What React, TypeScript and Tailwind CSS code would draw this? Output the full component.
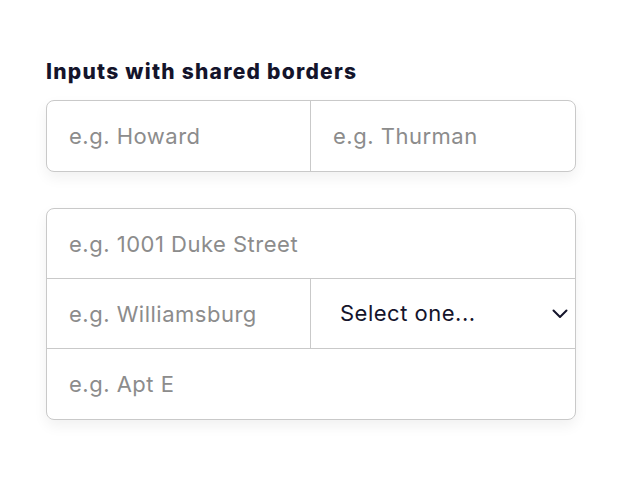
import { useState } from 'react';

const cellInput =
    'w-full h-full px-[22px] text-[22px] tracking-[0.5px] text-[#14142b] placeholder:text-[#8c8c8c] bg-transparent outline-none';

export default function App() {
    const [state, setState] = useState('');

    return (
        <div className="min-h-[486px] w-[630px] bg-white px-[46px] pt-[58px]" style={{ fontFamily: 'Inter, "Noto Sans", sans-serif' }}>
            <h2 className="text-[21px] leading-[28px] font-extrabold tracking-[1.25px] text-[#14142b]">
                Inputs with shared borders
            </h2>

            {/* First + last name */}
            <div className="mt-[14px] w-[530px] grid grid-cols-2 rounded-lg border border-[#c9c9c9] overflow-hidden bg-white shadow-[0_6px_14px_rgba(0,0,0,0.06)]">
                <div className="h-[70px] border-r border-[#c9c9c9]">
                    <input className={cellInput} placeholder="e.g. Howard" />
                </div>
                <div className="h-[70px]">
                    <input className={cellInput} placeholder="e.g. Thurman" />
                </div>
            </div>

            {/* Address */}
            <div className="mt-[36px] w-[530px] rounded-lg border border-[#c9c9c9] overflow-hidden bg-white shadow-[0_6px_14px_rgba(0,0,0,0.06)]">
                <div className="h-[70px] border-b border-[#c9c9c9]">
                    <input className={cellInput} placeholder="e.g. 1001 Duke Street" />
                </div>
                <div className="h-[70px] grid grid-cols-2 border-b border-[#c9c9c9]">
                    <div className="border-r border-[#c9c9c9]">
                        <input className={cellInput} placeholder="e.g. Williamsburg" />
                    </div>
                    <div className="relative">
                        <select
                            value={state}
                            onChange={e => setState(e.target.value)}
                            className="w-full h-full appearance-none bg-transparent pl-[29px] pr-10 text-[22px] tracking-[0.5px] text-[#14142b] outline-none"
                        >
                            <option value="">Select one...</option>
                            <option value="VA">Virginia</option>
                            <option value="NY">New York</option>
                        </select>
                        <svg
                            className="pointer-events-none absolute right-[7px] top-1/2 -translate-y-1/2"
                            width="16" height="10" viewBox="0 0 16 10" fill="none"
                        >
                            <path d="M1.5 1.5L8 8L14.5 1.5" stroke="#14142b" strokeWidth="2" strokeLinecap="round" strokeLinejoin="round" />
                        </svg>
                    </div>
                </div>
                <div className="h-[70px]">
                    <input className={cellInput} placeholder="e.g. Apt E" />
                </div>
            </div>
        </div>
    );
}
